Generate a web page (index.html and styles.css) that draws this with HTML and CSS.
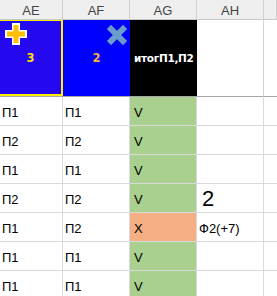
FILE: index.html
```html
<!DOCTYPE html>
<html>
<head>
<meta charset="utf-8">
<link rel="stylesheet" href="styles.css">
</head>
<body>
<div class="sheet">
  <div class="ch">AE</div>
  <div class="ch">AF</div>
  <div class="ch">AG</div>
  <div class="ch">AH</div>
  <div class="ch last"></div>

  <div class="hc hc-ae">
    <svg class="ico-plus" width="24" height="24" viewBox="0 0 24 24">
      <path d="M8 1h8v7h7v8h-7v7h-8v-7h-7v-8h7z" fill="#fff"/>
      <path d="M9.5 3h5v6.5h6.5v5h-6.5v6.5h-5v-6.5h-6.5v-5h6.5z" fill="#ffbf00"/>
    </svg>
    <span class="num num-3">3</span>
  </div>
  <div class="hc hc-af">
    <svg class="ico-x" width="24" height="24" viewBox="0 0 24 24">
      <path d="M2 6l4-4 6 6 6-6 4 4-6 6 6 6-4 4-6-6-6 6-4-4 6-6z" fill="#6a9cd0" stroke="#4b78a8" stroke-width="0.8"/>
    </svg>
    <span class="num num-2">2</span>
  </div>
  <div class="hc hc-ag"><span class="itog">итогП1,П2</span></div>
  <div class="hc hc-ah"></div>
  <div class="hc hc-rest"></div>

  <div class="c">П1</div><div class="c">П1</div><div class="c g">V</div><div class="c"></div><div class="c last"></div>
  <div class="c">П2</div><div class="c">П2</div><div class="c g">V</div><div class="c"></div><div class="c last"></div>
  <div class="c">П1</div><div class="c">П1</div><div class="c g">V</div><div class="c"></div><div class="c last"></div>
  <div class="c">П2</div><div class="c">П2</div><div class="c g">V</div><div class="c big">2</div><div class="c last"></div>
  <div class="c">П1</div><div class="c">П2</div><div class="c o">X</div><div class="c">Ф2(+7)</div><div class="c last"></div>
  <div class="c">П1</div><div class="c">П1</div><div class="c g">V</div><div class="c"></div><div class="c last"></div>
  <div class="c">П1</div><div class="c">П1</div><div class="c g">V</div><div class="c"></div><div class="c last"></div>
</div>
</body>
</html>
```

FILE: styles.css
```css
html, body {
  margin: 0;
  padding: 0;
  background: #fff;
  overflow: hidden;
}
.sheet {
  display: grid;
  grid-template-columns: 63px 67px 67px 67px 13px;
  grid-template-rows: 20px 77px repeat(7, 29px);
  font-family: "Liberation Sans", Arial, sans-serif;
  width: 277px;
}
.ch {
  box-sizing: border-box;
  background: #efefef;
  border-right: 1px solid #d0d0d0;
  border-bottom: 1px solid #c8c8c8;
  color: #444;
  font-size: 13px;
  display: flex;
  align-items: center;
  justify-content: center;
  padding-top: 1px;
}
.hc {
  position: relative;
  box-sizing: border-box;
  border-bottom: 1px solid #a6a6a6;
  display: flex;
  align-items: center;
  justify-content: center;
}
.hc-ae {
  background: #2308f0;
  border-top: 1px solid #ffee00;
  border-right: 2px solid #ffee00;
  border-bottom: 2px solid #ffee00;
  margin-bottom: 1px;
  box-shadow: 0 1px 0 #a6a6a6;
}
.hc-af {
  background: #0000ff;
}
.hc-ag {
  background: #000;
  justify-content: flex-start;
  padding-left: 4px;
}
.hc-ah, .hc-rest {
  background: #fff;
  border-right: 1px solid #d4d4d4;
}
.hc-rest { border-right: none; }
.ico-plus {
  position: absolute;
  left: 4px;
  top: 1px;
}
.ico-x {
  position: absolute;
  right: 1px;
  top: 3px;
}
.num {
  font-size: 11.5px;
  font-weight: bold;
  font-family: "DejaVu Sans", sans-serif;
}
.num-3 { color: #ffdd00; }
.num-2 { color: #ffb030; }
.itog {
  color: #fff;
  font-weight: bold;
  font-size: 10.5px;
  font-family: "DejaVu Sans", sans-serif;
  letter-spacing: -0.3px;
}
.c {
  box-sizing: border-box;
  border-right: 1px solid #dadada;
  border-bottom: 1px solid #dadada;
  font-size: 13px;
  color: #000;
  display: flex;
  align-items: flex-end;
  padding: 0 0 5px 2px;
  line-height: 15px;
}
.c.last { border-right: none; }
.c.g { background: #a9d08e; padding-left: 4px; }
.c.o { background: #f4b084; padding-left: 4px; }
.c.big {
  font-size: 22px;
  line-height: 22px;
  padding-left: 5px;
  padding-bottom: 2px;
}
```
